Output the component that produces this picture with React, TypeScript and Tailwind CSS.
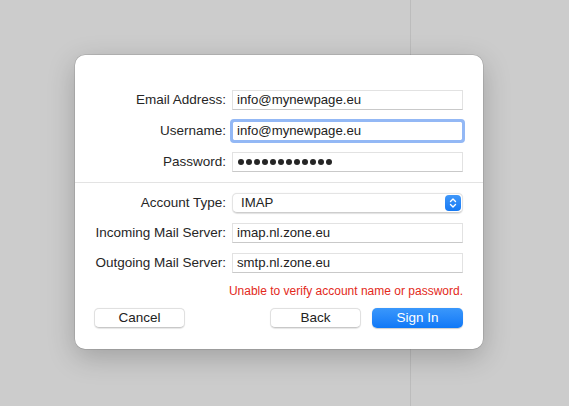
import React from 'react';

const font = { fontFamily: '"Liberation Sans", Arial, sans-serif' };

const Row = ({ label, children }: { label: string; children: React.ReactNode }) => (
    <div className="flex items-center h-[20px]">
        <div className="w-[152px] text-right text-[13.5px] text-[#262626] pr-[1px]">{label}</div>
        <div className="ml-[5px] w-[231px] h-[20px]">{children}</div>
    </div>
);

const Field = ({ value, focused }: { value: string; focused?: boolean }) => (
    <div
        className={
            'h-full w-full bg-white flex items-center pl-[4px] text-[13.2px] text-[#222] border ' +
            (focused
                ? 'border-[#6d9ef0] outline-[3px] outline-solid outline-[#93b8f5] -outline-offset-1 rounded-[2px]'
                : 'border-[#e2e2e2] border-b-[#c9c9c9]')
        }
    >
        {value}
    </div>
);

const Dots = () => (
    <div className="h-full w-full bg-white flex items-center gap-[2px] pl-[5px] border border-[#e2e2e2] border-b-[#c9c9c9]">
        {Array.from({ length: 12 }).map((_, i) => (
            <span key={i} className="w-[6px] h-[6px] rounded-full bg-[#262626]" />
        ))}
    </div>
);

const Select = () => (
    <div className="h-full w-full bg-white rounded-[5px] border border-[#e4e4e4] border-b-[#cdcdcd] shadow-[0_0.5px_1px_rgba(0,0,0,0.12)] flex items-center justify-between pl-[8px] pr-[1px] text-[13.2px] text-[#222]">
        <span>IMAP</span>
        <div className="w-[16px] h-[16px] rounded-[4px] bg-gradient-to-b from-[#3f97f9] to-[#1479f4] flex items-center justify-center">
            <svg width="10" height="12" viewBox="0 0 10 12" fill="none">
                <path d="M2.5 4.5 L5 2 L7.5 4.5" stroke="white" strokeWidth="1.4" strokeLinecap="round" strokeLinejoin="round" />
                <path d="M2.5 7.5 L5 10 L7.5 7.5" stroke="white" strokeWidth="1.4" strokeLinecap="round" strokeLinejoin="round" />
            </svg>
        </div>
    </div>
);

const Button = ({ label, primary }: { label: string; primary?: boolean }) => (
    <button
        className={
            'w-[91px] h-[20px] rounded-[5px] text-[13.5px] flex items-center justify-center ' +
            (primary
                ? 'bg-gradient-to-b from-[#3a97fb] to-[#0d78f7] text-white shadow-[0_0.5px_1px_rgba(0,0,0,0.2)]'
                : 'bg-white text-[#222] border border-[#e0e0e0] border-b-[#c8c8c8] shadow-[0_0.5px_1px_rgba(0,0,0,0.1)]')
        }
    >
        {label}
    </button>
);

export default function App() {
    return (
        <div className="relative w-[569px] h-[406px] bg-[#cccccc] overflow-hidden" style={font}>
            <div className="absolute left-[410px] top-0 w-[1px] h-full bg-[#bcbcbc]" />
            <div className="relative pt-[55px] pl-[75px]">
                <div className="w-[408px] h-[294px] bg-white rounded-[10px] shadow-[0_0_0_0.5px_rgba(0,0,0,0.18),0_8px_28px_rgba(0,0,0,0.22)] flex flex-col pt-[35px]">
                    <div className="flex flex-col gap-[11px]">
                        <Row label="Email Address:">
                            <Field value="info@mynewpage.eu" />
                        </Row>
                        <Row label="Username:">
                            <Field value="info@mynewpage.eu" focused />
                        </Row>
                        <Row label="Password:">
                            <Dots />
                        </Row>
                    </div>
                    <div className="h-[1px] bg-[#e3e3e3] mt-[10px]" />
                    <div className="flex flex-col gap-[10px] mt-[10px]">
                        <Row label="Account Type:">
                            <Select />
                        </Row>
                        <Row label="Incoming Mail Server:">
                            <Field value="imap.nl.zone.eu" />
                        </Row>
                        <Row label="Outgoing Mail Server:">
                            <Field value="smtp.nl.zone.eu" />
                        </Row>
                    </div>
                    <div className="mt-[11px] h-[14px] pr-[20px] text-right text-[12px] text-[#e3291b] leading-[14px]">
                        Unable to verify account name or password.
                    </div>
                    <div className="mt-[10px] flex items-center pl-[19px] pr-[20px]">
                        <Button label="Cancel" />
                        <div className="flex-1" />
                        <Button label="Back" />
                        <div className="w-[11px]" />
                        <Button label="Sign In" primary />
                    </div>
                </div>
            </div>
        </div>
    );
}
